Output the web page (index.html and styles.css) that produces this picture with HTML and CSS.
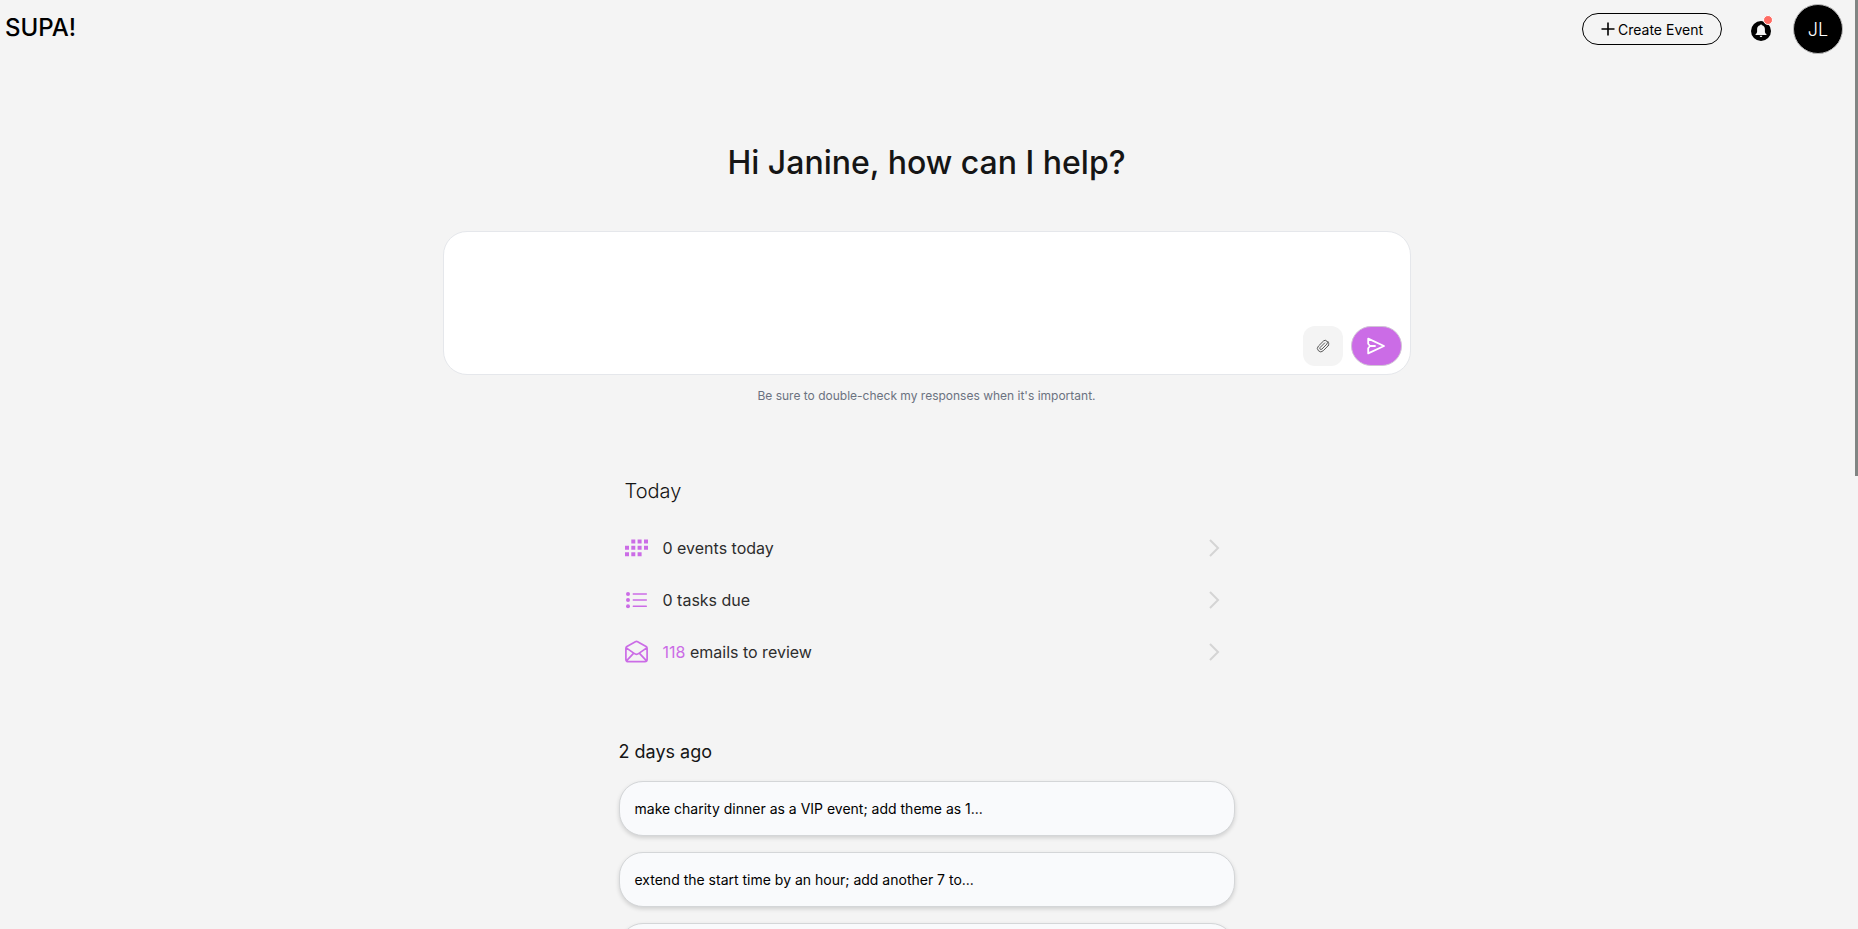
FILE: index.html
```html
<!DOCTYPE html>
<html lang="en">
<head>
  <meta charset="UTF-8" />
  <meta name="viewport" content="width=device-width, initial-scale=1" />
  <title>SUPA!</title>
  <link rel="stylesheet" href="styles.css">
</head>
<body>
  <header class="topbar">
    <a class="logo" href="#">SUPA!</a>
    <div class="topbar-actions">
      <button class="create-btn" type="button">
        <svg width="14" height="14" viewBox="0 0 14 14" fill="none" stroke="currentColor" stroke-width="1.6">
          <path d="M7 0.5v13M0.5 7h13" />
        </svg>
        Create Event
      </button>
      <button class="bell-btn" type="button" aria-label="Notifications">
        <svg width="20" height="20" viewBox="0 0 20 20">
          <circle cx="10" cy="10" r="10" fill="#000" />
          <path d="M10 3.400c.6 0 1 .4 1 .9 1.900.5 2.900 2 2.900 3.900v2.200c0 1.300.6 2 1.500 2.700v.9H4.600v-.9c.9-.7 1.500-1.400 1.500-2.700V8.200c0-1.900 1-3.400 2.900-3.900 0-.5.4-.9 1-.9zM8.700 14.700h2.600c0 .8-.6 1.300-1.300 1.300s-1.300-.5-1.300-1.300z" fill="#f4f4f4" />
        </svg>
        <span class="bell-dot"></span>
      </button>
      <button class="avatar" type="button">JL</button>
    </div>
  </header>

  <main>
    <h1>Hi Janine, how can I help?</h1>

    <form class="prompt">
      <textarea class="prompt-input" aria-label="Message"></textarea>
      <div class="prompt-actions">
        <button class="attach-btn" type="button" aria-label="Attach file">
          <svg width="14" height="14" viewBox="0 0 24 24" fill="none" stroke="currentColor" stroke-width="1.700" stroke-linecap="round" stroke-linejoin="round">
            <path d="M21 11.500l-8.700 8.700a5.700 5.700 0 0 1-8.100-8.100l8.900-8.900a3.900 3.900 0 0 1 5.500 5.500L10 17.400a2 2 0 0 1-2.900-2.900l7.800-7.800" />
            <path d="M21 11.500c1.400-2 1.400-5.400-.6-7.400" />
          </svg>
        </button>
        <button class="send-btn" type="submit" aria-label="Send">
          <svg width="20" height="20" viewBox="0 0 20 20" fill="none" stroke="currentColor" stroke-width="1.800" stroke-linecap="round" stroke-linejoin="round">
            <path d="M2.200 2.600L18 10 2.200 17.400V12.200L4 10 2.200 7.800zM4 10h5" />
          </svg>
        </button>
      </div>
    </form>
    <p class="note">Be sure to double-check my responses when it's important.</p>

    <section class="today">
      <h2>Today</h2>
      <a class="today-row" href="#">
        <svg class="row-icon" width="24" height="24" viewBox="0 0 24 24" fill="currentColor">
          <path d="M6.300 3.500h4v4h-4zM12.600 3.500h4v4h-4zM19 3.500h4v4h-4zM0 9.800h4v4H0zM6.300 9.800h4v4h-4zM12.600 9.800h4v4h-4zM19 9.800h4v4h-4zM0 16.200h4v4H0zM6.300 16.200h4v4h-4zM12.600 16.200h4v4h-4z" />
        </svg>
        <span>0 events today</span>
        <svg class="chevron" width="24" height="24" viewBox="0 0 24 24"><path d="M8 4l8 8-8 8" /></svg>
      </a>
      <a class="today-row" href="#">
        <svg class="row-icon" width="24" height="24" viewBox="0 0 24 24" fill="currentColor">
          <circle cx="3" cy="6" r="2" /><circle cx="3" cy="12" r="2" /><circle cx="3" cy="18.300" r="2" />
          <path d="M8.300 6h13M8.300 12h13M8.300 18.300h13" stroke="currentColor" stroke-width="1.500" stroke-linecap="round" />
        </svg>
        <span>0 tasks due</span>
        <svg class="chevron" width="24" height="24" viewBox="0 0 24 24"><path d="M8 4l8 8-8 8" /></svg>
      </a>
      <a class="today-row" href="#">
        <svg class="row-icon" width="24" height="24" viewBox="0 0 24 24" fill="none" stroke="currentColor" stroke-width="1.700" stroke-linejoin="round" stroke-linecap="round">
          <path d="M.9 8.200c0-.8.400-1.400 1-1.800L10.400 1.700c.7-.4 1.500-.4 2.200 0l8.500 4.700c.6.400 1 1 1 1.800V19.500c0 1.300-.9 2.200-2.200 2.200H3.100C1.800 21.700.9 20.800.9 19.500zM1.300 7.900l7.800 5.500c1.500 1.100 3.300 1.100 4.800 0l7.800-5.500M1.700 20.700l6.800-7.400M21.300 20.700l-6.800-7.400" />
        </svg>
        <span><span class="count">118</span> emails to review</span>
        <svg class="chevron" width="24" height="24" viewBox="0 0 24 24"><path d="M8 4l8 8-8 8" /></svg>
      </a>
    </section>

    <section class="history">
      <h2>2 days ago</h2>
      <button class="history-item" type="button">make charity dinner as a VIP event; add theme as 1...</button>
      <button class="history-item" type="button">extend the start time by an hour; add another 7 to...</button>
      <button class="history-item" type="button" aria-label="Earlier chat"></button>
    </section>
  </main>

  <div class="scroll-thumb"></div>
</body>
</html>
```

FILE: styles.css
```css
* {
  box-sizing: border-box;
}
html {
  scrollbar-width: none;
}
body {
  font-family: Inter, "Liberation Sans", sans-serif;
  margin: 0;
  padding-right: 5px;
  background: #f4f4f4;
  color: #151515;
}
button {
  font-family: inherit;
  padding: 0;
  border: none;
  cursor: pointer;
}
a {
  color: inherit;
  text-decoration: none;
}
svg {
  display: block;
  flex-shrink: 0;
}

.topbar {
  display: flex;
  justify-content: space-between;
  align-items: center;
  height: 58px;
  padding: 0 10px 0 5px;
}
.logo {
  color: #000;
  font-size: 24px;
  line-height: 32px;
  font-weight: 500;
  padding-bottom: 2px;
}
.topbar-actions {
  display: flex;
  align-items: center;
}
.create-btn {
  display: flex;
  align-items: center;
  justify-content: center;
  gap: 3px;
  width: 140px;
  height: 32px;
  margin-right: 29px;
  border: 1px solid #000;
  border-radius: 16px;
  background: transparent;
  color: #000;
  font-size: 14px;
}
.bell-btn {
  position: relative;
  margin: 4px 22px 0 0;
  background: transparent;
}
.bell-dot {
  position: absolute;
  top: -6px;
  right: -2px;
  width: 10px;
  height: 10px;
  border: 1px solid #fff;
  border-radius: 50%;
  background: #ff6b63;
}
.avatar {
  width: 50px;
  height: 50px;
  border: 1px solid #bbb;
  border-radius: 50%;
  background: #000;
  color: #fff;
  font-size: 18px;
  font-weight: 300;
}

main {
  display: flex;
  flex-direction: column;
  align-items: center;
}
h1 {
  margin: 85px 0 0;
  font-size: 32px;
  line-height: 40px;
  font-weight: 500;
}
.prompt {
  display: flex;
  flex-direction: column;
  width: 968px;
  max-width: 100%;
  height: 144px;
  margin-top: 48px;
  padding: 8px;
  border: 1px solid #e5e7eb;
  border-radius: 24px;
  background: #fff;
}
.prompt-input {
  flex: 1;
  border: none;
  outline: none;
  resize: none;
  background: transparent;
  font: inherit;
}
.prompt-actions {
  display: flex;
  justify-content: flex-end;
  gap: 8px;
}
.prompt-actions button {
  display: flex;
  align-items: center;
  justify-content: center;
  height: 40px;
}
.attach-btn {
  width: 40px;
  border-radius: 12px;
  background: #f4f4f4;
  color: #555;
}
.prompt-actions .send-btn {
  width: 51px;
  border: 1px solid #d1c4d6;
  border-radius: 20px;
  background: #cb6ce6;
  color: #fff;
}
.note {
  margin: 13px 0 0;
  color: #6b7280;
  font-size: 12px;
  line-height: 16px;
}

.today {
  width: 616px;
  max-width: 100%;
  margin-top: 71px;
  padding: 0 9px 0 6px;
}
.today h2 {
  margin: 0 0 15px;
  font-size: 20px;
  line-height: 32px;
  font-weight: 300;
}
.today-row {
  display: flex;
  align-items: center;
  gap: 14px;
  height: 52px;
  color: #2d2d2d;
  font-size: 16px;
}
.row-icon,
.count {
  color: #cb6ce6;
}
.chevron {
  margin-left: auto;
  fill: none;
  stroke: #d4d4d4;
  stroke-width: 2;
}

.history {
  display: flex;
  flex-direction: column;
  gap: 16px;
  width: 616px;
  max-width: 100%;
  margin-top: 60px;
}
.history h2 {
  margin: 0;
  font-size: 18px;
  line-height: 27px;
  font-weight: 400;
}
.history-item {
  height: 55px;
  padding: 0 15px;
  border: 1px solid #d4d6d8;
  border-radius: 24px;
  background: #f9fafc;
  box-shadow: 0 2px 4px rgba(0, 0, 0, 0.15);
  color: #000;
  font-size: 14px;
  text-align: left;
}

/* slim scroll indicator over the right edge */
.scroll-thumb {
  position: fixed;
  top: 0;
  right: 0;
  width: 3px;
  height: 51.2vh;
  background: #808583;
}
```
